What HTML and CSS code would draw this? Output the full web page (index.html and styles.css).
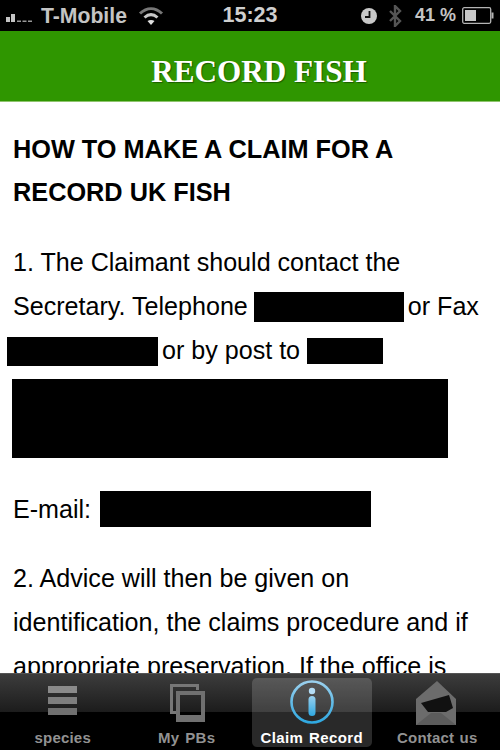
FILE: index.html
```html
<!DOCTYPE html>
<html lang="en">
<head>
<meta charset="utf-8">
<title>Record Fish</title>
<link rel="stylesheet" href="styles.css">
</head>
<body>
<div class="phone">
  <div class="status">
    <div class="status-left">
      <svg class="signal" width="36" height="12" viewBox="0 0 36 12"><rect x="0" y="6" width="4" height="5" fill="#c4c4c4"/><rect x="5" y="3" width="4" height="8" fill="#c4c4c4"/><rect x="11" y="9.500" width="4" height="1.500" fill="#999"/><rect x="16.500" y="9.500" width="4" height="1.500" fill="#999"/><rect x="22" y="9.500" width="4" height="1.500" fill="#999"/></svg>
      <span class="carrier">T-Mobile</span>
      <svg class="wifi" width="26" height="20" viewBox="0 0 26 20"><path d="M2 7.500C9 1 17 1 24 7.500" fill="none" stroke="#777" stroke-width="3"/><path d="M6.500 11.500C11 7.500 15 7.500 19.500 11.500" fill="none" stroke="#c8c8c8" stroke-width="3"/><path d="M13 19L9.500 15C11.500 13.500 14.500 13.500 16.500 15Z" fill="#e0e0e0"/></svg>
    </div>
    <div class="clock">15:23</div>
    <div class="status-right">
      <svg class="alarm" width="16" height="16" viewBox="0 0 16 16"><circle cx="8" cy="8" r="8" fill="#c8c8c8"/><path d="M8.500 3V9H4" fill="none" stroke="#111" stroke-width="1.800"/></svg>
      <svg class="bt" width="14" height="22" viewBox="0 0 14 22"><path d="M2 6L12 16L7 21V1L12 6L2 16" fill="none" stroke="#555" stroke-width="2.400"/></svg>
      <span class="pct">41 %</span>
      <svg class="battery" width="32" height="17" viewBox="0 0 32 17"><rect x="0.700" y="0.700" width="28" height="15.600" rx="1.500" fill="none" stroke="#b4b4b4" stroke-width="1.300"/><rect x="3" y="3" width="11" height="11" fill="#c8c8c8"/><rect x="29.500" y="5.500" width="2" height="6" fill="#b4b4b4"/></svg>
    </div>
  </div>
  <header class="title-bar"><h1>RECORD FISH</h1></header>
  <main class="content">
    <h2>HOW TO MAKE A CLAIM FOR A RECORD UK FISH</h2>
    <p class="step first">1. The Claimant should contact the<br>
      Secretary. Telephone <span class="redact r-phone"></span> <span class="tight">or Fax</span><br>
      <span class="redact r-fax"></span> <span class="tight">or by post to</span> <span class="redact r-name"></span></p>
    <div class="redact r-address"></div>
    <p class="email">E-mail: <span class="redact r-mail"></span></p>
    <p class="step">2. Advice will then be given on identification, the claims procedure and if appropriate preservation. If the office is</p>
  </main>
  <nav class="tabs">
    <div class="tab tab-species">
      <svg width="32" height="32" viewBox="0 0 32 32"><rect x="1" y="1" width="29" height="7" fill="#8a8a8a"/><rect x="1" y="12" width="29" height="7" fill="#7e7e7e"/><rect x="1" y="23" width="29" height="7" fill="#707070"/></svg>
      <span>species</span>
    </div>
    <div class="tab tab-pbs">
      <svg width="36" height="40" viewBox="0 0 36 40"><path fill-rule="evenodd" d="M0 1H29V7H26V4H3V28H6V31H0Z" fill="#777"/><path fill-rule="evenodd" d="M6 8H35V39H6ZM10 12V32H31V12Z" fill="#707070"/></svg>
      <span>My PBs</span>
    </div>
    <div class="tab active">
      <svg width="46" height="46" viewBox="0 0 46 46"><defs><linearGradient id="g2" x1="0" y1="0" x2="0" y2="1"><stop offset="0" stop-color="#9ad0ee"/><stop offset="1" stop-color="#2fa8e0"/></linearGradient></defs><circle cx="23" cy="23" r="20.500" fill="none" stroke="url(#g2)" stroke-width="2.600"/><circle cx="23" cy="12" r="3.200" fill="#b4dcf4"/><rect x="19.500" y="17" width="7" height="20" rx="3.500" fill="url(#g2)"/></svg>
      <span>Claim Record</span>
    </div>
    <div class="tab tab-contact">
      <svg width="42" height="44" viewBox="0 0 42 44"><path d="M21 0L40 18V44H0V18Z" fill="#6c6c6c"/><path d="M5 22L33 14L37 27L30 31H12Z" fill="#111"/><path d="M0 44L15 32H25L40 44Z" fill="#5c5c5c"/></svg>
      <span>Contact us</span>
    </div>
  </nav>
</div>
</body>
</html>
```
FILE: styles.css
```css
* { box-sizing: border-box; }
html, body { margin: 0; padding: 0; background: #fff; }
.phone {
  width: 500px;
  height: 750px;
  display: flex;
  flex-direction: column;
  overflow: hidden;
  font-family: "Liberation Sans", Arial, sans-serif;
}
.status {
  flex: 0 0 31px;
  background: #000;
  color: #c4c4c4;
  display: grid;
  grid-template-columns: 1fr auto 1fr;
  align-items: center;
  font-weight: bold;
}
.status-left { display: flex; align-items: center; padding-left: 6px; }
.signal { margin-right: -1px; margin-top: 2px; }
.carrier { font-size: 21.200px; }
.wifi { margin-left: 11px; }
.clock { font-size: 21.500px; color: #cfcfcf; }
.status-right { display: flex; align-items: center; justify-content: flex-end; padding-right: 6px; }
.alarm { margin-right: 11px; }
.bt { margin-right: 13px; }
.pct { font-size: 18px; margin-right: 6px; }
.title-bar {
  flex: 0 0 71px;
  background: #2f9600;
  border-bottom: 1px solid #8fc46e;
  display: flex;
  align-items: center;
  justify-content: center;
  padding: 11px 0 0 18px;
}
h1 {
  margin: 0;
  color: #fff;
  font-family: "Liberation Serif", "Times New Roman", serif;
  font-size: 31.200px;
  font-weight: bold;
  text-shadow: 1px 1px 1px #1c5c00;
}
.content {
  flex: 1 1 0;
  min-height: 0;
  overflow: hidden;
  padding: 26px 13px 0;
  color: #000;
  font-size: 25.100px;
  line-height: 44px;
}
h2 {
  margin: 0;
  font-size: 25.300px;
  line-height: 43px;
  font-weight: bold;
}
.step { margin: 25px 0 0; }
.step.first { margin-top: 26px; }
.email { margin: 29px 0 0; }
.tight { margin-left: -3px; }
.redact { background: #000; display: inline-block; }
.r-phone { width: 150px; height: 30px; margin-left: -1px; vertical-align: -7px; }
.r-fax { width: 151px; height: 29px; margin-left: -6px; vertical-align: -7px; }
.r-name { width: 76px; height: 26px; vertical-align: -5px; }
.r-address { display: block; width: 436px; height: 79px; margin-left: -1px; margin-top: 7px; }
.r-mail { width: 271px; height: 36px; margin-left: 2px; vertical-align: -9px; }
.tabs {
  flex: 0 0 77px;
  display: grid;
  grid-template-columns: repeat(4, 1fr);
  padding: 4px 3px 3px;
  border-top: 1px solid #555;
  background: linear-gradient(#3c3c3c 0, #1c1c1c 50%, #000 50%, #000 100%);
}
.tab {
  display: flex;
  flex-direction: column;
  align-items: center;
  justify-content: flex-end;
  color: #929292;
  font-size: 15px;
  font-weight: bold;
  border-radius: 5px;
}
.tab svg { margin-bottom: 4px; }
.tab span { line-height: 18px; letter-spacing: 0.200px; word-spacing: 1px; }
.tab-species { padding-right: 4px; }
.tab-species svg { margin-bottom: 12px; }
.tab-pbs { padding-right: 3px; }
.tab-pbs span { letter-spacing: 0.400px; }
.tab-pbs svg { margin: 0 0 6px 3px; }
.tab-contact { padding-left: 4px; }
.tab.active {
  color: #fff;
  background: rgba(255,255,255,0.16);
  margin: 0 2px;
}
.tab.active span { letter-spacing: 0.400px; }
```
